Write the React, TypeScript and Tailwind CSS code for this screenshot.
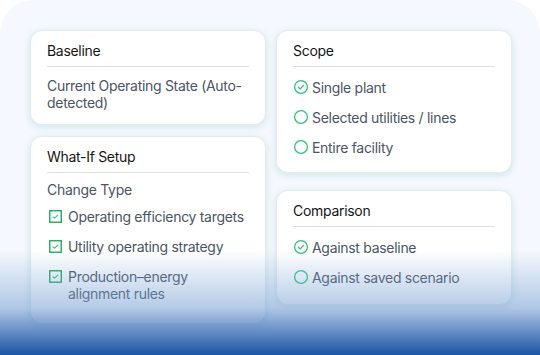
import React from "react";

const font = { fontFamily: "Inter, 'Noto Sans', sans-serif" };

const Card = ({
  title,
  className = "",
  children,
}: {
  title: string;
  className?: string;
  children: React.ReactNode;
}) => (
  <div
    className={`rounded-[12px] border border-[#e4ecef] bg-white px-4 pt-[11px] shadow-[0_2px_7px_rgba(70,170,140,0.22)] ${className}`}
  >
    <div className="text-[14px] leading-[17px] tracking-[-0.3px] text-[#161616]">{title}</div>
    <div className="mt-[7px] h-px bg-[#dcdfe3]" />
    {children}
  </div>
);

const RadioItem = ({ label, checked }: { label: string; checked?: boolean }) => (
  <div className="flex h-5 items-center gap-[3px] text-[14px] tracking-[-0.3px] text-[#4b5563]">
    <svg width="16" height="16" viewBox="0 0 16 16" className="shrink-0">
      <circle cx="8" cy="8" r="6.4" fill="none" stroke="#2ec27e" strokeWidth="1.3" />
      {checked && (
        <path d="M5.4 8.2 7.2 10 10.6 6.4" fill="none" stroke="#2ec27e" strokeWidth="1.2" strokeLinecap="round" strokeLinejoin="round" />
      )}
    </svg>
    <span>{label}</span>
  </div>
);

const CheckItem = ({ children }: { children: React.ReactNode }) => (
  <div className="flex items-start gap-[6px] text-[14px] leading-[17px] tracking-[-0.3px] text-[#4b5563]">
    <svg width="13" height="13" viewBox="0 0 13 13" className="mt-[2px] shrink-0">
      <rect x="0.75" y="0.75" width="11.5" height="11.5" fill="#fff" stroke="#1fae55" strokeWidth="1.4" />
      <path d="M4 6.8 5.6 8.2 8.8 5.2" fill="none" stroke="#2ec27e" strokeWidth="1.1" strokeLinecap="round" strokeLinejoin="round" />
    </svg>
    <span>{children}</span>
  </div>
);

export default function App() {
  return (
    <div className="relative h-[355px] w-[540px] overflow-hidden bg-white" style={font}>
      <div className="flex h-full gap-[10px] rounded-t-[34px] bg-[#f5f8fe] pl-[30px] pr-[28px] pt-[30px]">
        {/* left column */}
        <div className="flex w-[236px] shrink-0 flex-col gap-[11px]">
          <Card title="Baseline" className="pb-[13px]">
            <p className="mt-[10px] text-[14px] leading-[17px] tracking-[-0.3px] text-[#4b5563]">
              Current Operating State (Auto-detected)
            </p>
          </Card>
          <Card title="What-If Setup" className="pb-[21px]">
            <p className="mt-[8px] text-[14px] leading-[17px] tracking-[-0.3px] text-[#4b5563]">Change Type</p>
            <div className="mt-[10px] flex flex-col gap-[13px] pl-[2px]">
              <CheckItem>Operating efficiency targets</CheckItem>
              <CheckItem>Utility operating strategy</CheckItem>
              <CheckItem>
                Production–energy
                <br />
                alignment rules
              </CheckItem>
            </div>
          </Card>
        </div>

        {/* right column */}
        <div className="flex w-[236px] shrink-0 flex-col gap-[17px]">
          <Card title="Scope" className="pb-[15px]">
            <div className="mt-[10px] flex flex-col gap-[10px]">
              <RadioItem label="Single plant" checked />
              <RadioItem label="Selected utilities / lines" />
              <RadioItem label="Entire facility" />
            </div>
          </Card>
          <Card title="Comparison" className="pb-[17px]">
            <div className="mt-[10px] flex flex-col gap-[10px]">
              <RadioItem label="Against baseline" checked />
              <RadioItem label="Against saved scenario" />
            </div>
          </Card>
        </div>
      </div>

      {/* bottom fade */}
      <div className="pointer-events-none absolute inset-x-0 bottom-0 h-[105px] bg-linear-to-b from-[rgba(235,241,250,0)] via-[rgba(120,160,212,0.55)] via-55% to-[#1a54a3]" />
    </div>
  );
}
